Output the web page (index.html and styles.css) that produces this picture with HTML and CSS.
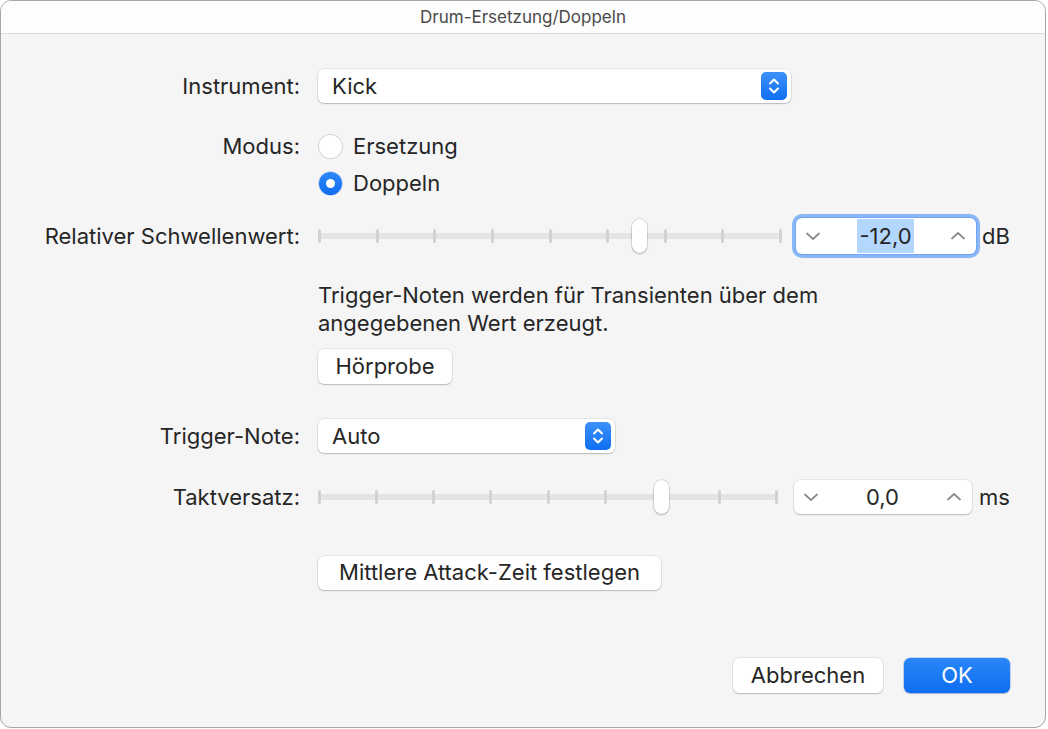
FILE: index.html
```html
<!DOCTYPE html>
<html lang="de">
<head>
<meta charset="utf-8">
<title>Drum-Ersetzung/Doppeln</title>
<link rel="stylesheet" href="styles.css">
</head>
<body>
<div class="window">
  <div class="titlebar">Drum-Ersetzung/Doppeln</div>
  <div class="content">
    <div class="row r-instrument">
      <div class="label">Instrument:</div>
      <div class="popup popup-instrument">
        <span class="popup-text">Kick</span>
        <span class="popup-arrows"><svg width="26" height="28" viewBox="0 0 26 28"><path d="M9 11.5 L13 7.5 L17 11.5 M9 16.5 L13 20.5 L17 16.5" fill="none" stroke="#fff" stroke-width="2" stroke-linecap="round" stroke-linejoin="round"/></svg></span>
      </div>
    </div>

    <div class="row r-mode">
      <div class="label label-top">Modus:</div>
      <div class="radios">
        <div class="radio-item"><span class="radio"></span><span>Ersetzung</span></div>
        <div class="radio-item"><span class="radio checked"></span><span>Doppeln</span></div>
      </div>
    </div>

    <div class="row r-thresh">
      <div class="label">Relativer Schwellenwert:</div>
      <div class="slider-line">
        <div class="slider slider-thresh">
          <div class="track"></div>
          <div class="ticks"><i></i><i></i><i></i><i></i><i></i><i></i><i></i><i></i><i></i></div>
          <div class="knob" style="left:314px"></div>
        </div>
        <div class="stepper stepper-focus">
          <svg class="chev" width="16" height="10" viewBox="0 0 16 10"><path d="M2 2.5 L8 8 L14 2.5" fill="none" stroke="#8c8c8c" stroke-width="1.8" stroke-linecap="round" stroke-linejoin="round"/></svg>
          <span class="value"><span class="sel">-12,0</span></span>
          <svg class="chev" width="16" height="10" viewBox="0 0 16 10"><path d="M2 7.5 L8 2 L14 7.5" fill="none" stroke="#8c8c8c" stroke-width="1.8" stroke-linecap="round" stroke-linejoin="round"/></svg>
        </div>
        <span class="unit unit-db">dB</span>
      </div>
    </div>

    <div class="row r-desc">
      <div class="label"></div>
      <p class="desc">Trigger-Noten werden für Transienten über dem<br>angegebenen Wert erzeugt.</p>
    </div>

    <div class="row r-hoer">
      <div class="label"></div>
      <div><button class="btn btn-hoer">Hörprobe</button></div>
    </div>

    <div class="row r-trigger">
      <div class="label">Trigger-Note:</div>
      <div class="popup popup-trigger">
        <span class="popup-text">Auto</span>
        <span class="popup-arrows"><svg width="26" height="28" viewBox="0 0 26 28"><path d="M9 11.5 L13 7.5 L17 11.5 M9 16.5 L13 20.5 L17 16.5" fill="none" stroke="#fff" stroke-width="2" stroke-linecap="round" stroke-linejoin="round"/></svg></span>
      </div>
    </div>

    <div class="row r-takt">
      <div class="label">Taktversatz:</div>
      <div class="slider-line">
        <div class="slider slider-takt">
          <div class="track"></div>
          <div class="ticks"><i></i><i></i><i></i><i></i><i></i><i></i><i></i><i></i><i></i></div>
          <div class="knob" style="left:336px"></div>
        </div>
        <div class="stepper stepper-plain">
          <svg class="chev" width="16" height="10" viewBox="0 0 16 10"><path d="M2 2.5 L8 8 L14 2.5" fill="none" stroke="#8c8c8c" stroke-width="1.8" stroke-linecap="round" stroke-linejoin="round"/></svg>
          <span class="value">0,0</span>
          <svg class="chev" width="16" height="10" viewBox="0 0 16 10"><path d="M2 7.5 L8 2 L14 7.5" fill="none" stroke="#8c8c8c" stroke-width="1.8" stroke-linecap="round" stroke-linejoin="round"/></svg>
        </div>
        <span class="unit unit-ms">ms</span>
      </div>
    </div>

    <div class="row r-attack">
      <div class="label"></div>
      <div><button class="btn btn-attack">Mittlere Attack-Zeit festlegen</button></div>
    </div>

    <div class="actions">
      <button class="btn btn-cancel">Abbrechen</button>
      <button class="btn btn-ok">OK</button>
    </div>
  </div>
</div>
</body>
</html>
```

FILE: styles.css
```css
* { box-sizing: border-box; }

body {
  margin: 0;
  background: #ffffff;
  font-family: "Inter", "Liberation Sans", sans-serif;
  color: #262626;
  font-size: 22px;
}

.window {
  width: 1046px;
  height: 728px;
  border: 1px solid #a6a6a6;
  border-radius: 11px;
  background: #f5f5f5;
  overflow: hidden;
  display: flex;
  flex-direction: column;
}

.titlebar {
  height: 33px;
  flex: none;
  border-bottom: 1px solid #dcdcdc;
  background: #fdfdfd;
  display: flex;
  align-items: center;
  justify-content: center;
  font-size: 17px;
  color: #4a4a4a;
}

.content {
  flex: 1;
  display: flex;
  flex-direction: column;
  padding: 0 35px 34px 0;
}

.row {
  display: grid;
  grid-template-columns: 299px 1fr;
  column-gap: 18px;
  align-items: center;
}

.label {
  text-align: right;
  white-space: nowrap;
}

.label-top {
  align-self: start;
  line-height: 26px;
}

.r-instrument { margin-top: 35px; }
.r-mode { margin-top: 30px; }
.r-thresh { margin-top: 22px; height: 36px; }
.r-desc { margin-top: 27px; }
.r-hoer { margin-top: 12px; }
.r-trigger { margin-top: 35px; }
.r-takt { margin-top: 26px; height: 36px; }
.r-attack { margin-top: 41px; }

/* popup */
.popup {
  height: 34px;
  background: #ffffff;
  border-radius: 6px;
  box-shadow: 0 0 0 0.5px rgba(0,0,0,0.12), 0 1px 1.5px rgba(0,0,0,0.2);
  display: flex;
  align-items: center;
  justify-content: space-between;
  padding: 0 4px 0 14px;
}
.popup-instrument { width: 473px; }
.popup-trigger { width: 297px; }

.popup-arrows {
  width: 26px;
  height: 28px;
  border-radius: 5px;
  background: linear-gradient(#3d91f8, #0f6ff1);
  display: flex;
}

/* radios */
.radios {
  display: flex;
  flex-direction: column;
  gap: 11px;
}
.radio-item {
  height: 26px;
  display: flex;
  align-items: center;
  gap: 11px;
}
.radio {
  width: 23px;
  height: 23px;
  border-radius: 50%;
  background: #ffffff;
  box-shadow: 0 0 0 1px #d4d4d4, 0 1px 1px rgba(0,0,0,0.08);
  margin-left: 1px;
  display: flex;
  align-items: center;
  justify-content: center;
}
.radio.checked {
  background: linear-gradient(#2e88f7, #0e6ef1);
  box-shadow: 0 0 0 0.5px rgba(0,80,200,0.4);
}
.radio.checked::after {
  content: "";
  width: 9px;
  height: 9px;
  border-radius: 50%;
  background: #ffffff;
}

/* slider */
.slider-line {
  display: flex;
  align-items: center;
}
.slider {
  position: relative;
  height: 36px;
}
.slider-thresh { width: 464px; margin-right: 14px; }
.slider-takt { width: 460px; margin-right: 16px; }

.track {
  position: absolute;
  left: 0;
  right: 0;
  top: 15px;
  height: 6px;
  border-radius: 3px;
  background: #e4e4e4;
}
.ticks {
  position: absolute;
  left: 0;
  right: 0;
  top: 11px;
  height: 14px;
  display: flex;
  justify-content: space-between;
}
.ticks i {
  width: 3px;
  height: 14px;
  border-radius: 1.5px;
  background: #d2d2d2;
}
.knob {
  position: absolute;
  top: 1px;
  width: 15px;
  height: 34px;
  border-radius: 8px;
  background: #ffffff;
  box-shadow: 0 0 0 0.5px rgba(0,0,0,0.18), 0 1px 2px rgba(0,0,0,0.22);
}

/* stepper */
.stepper {
  background: #ffffff;
  border-radius: 6px;
  display: flex;
  align-items: center;
  justify-content: space-between;
  padding: 0 10px 0 9px;
}
.stepper-focus {
  width: 180px;
  height: 36px;
  box-shadow: 0 0 0 1px #6ea6f3, 0 0 0 4px #8ab7f6;
}
.stepper-plain {
  width: 178px;
  height: 34px;
  box-shadow: 0 0 0 0.5px rgba(0,0,0,0.12), 0 1px 1.5px rgba(0,0,0,0.2);
}
.chev { flex: none; }
.value {
  flex: 1;
  text-align: center;
}
.sel {
  background: #b4d7ff;
  padding: 4px 2px;
}
.unit-db { margin-left: 6px; }
.unit-ms { margin-left: 7px; }

.desc {
  margin: 0;
  line-height: 28px;
}

/* buttons */
.btn {
  font: inherit;
  color: #262626;
  background: #ffffff;
  border: none;
  border-radius: 6px;
  box-shadow: 0 0 0 0.5px rgba(0,0,0,0.12), 0 1px 1.5px rgba(0,0,0,0.2);
  height: 35px;
  padding: 0 0 2px;
}
.btn-hoer { width: 134px; }
.btn-attack { width: 343px; height: 34px; }

.actions {
  margin-top: auto;
  display: flex;
  justify-content: flex-end;
  gap: 21px;
}
.btn-cancel { width: 150px; }
.btn-ok {
  width: 106px;
  color: #ffffff;
  background: linear-gradient(#2a86f7, #0d6ef1);
  box-shadow: 0 0 0 0.5px rgba(0,80,200,0.35), 0 1px 1.5px rgba(0,0,0,0.18);
}
```
